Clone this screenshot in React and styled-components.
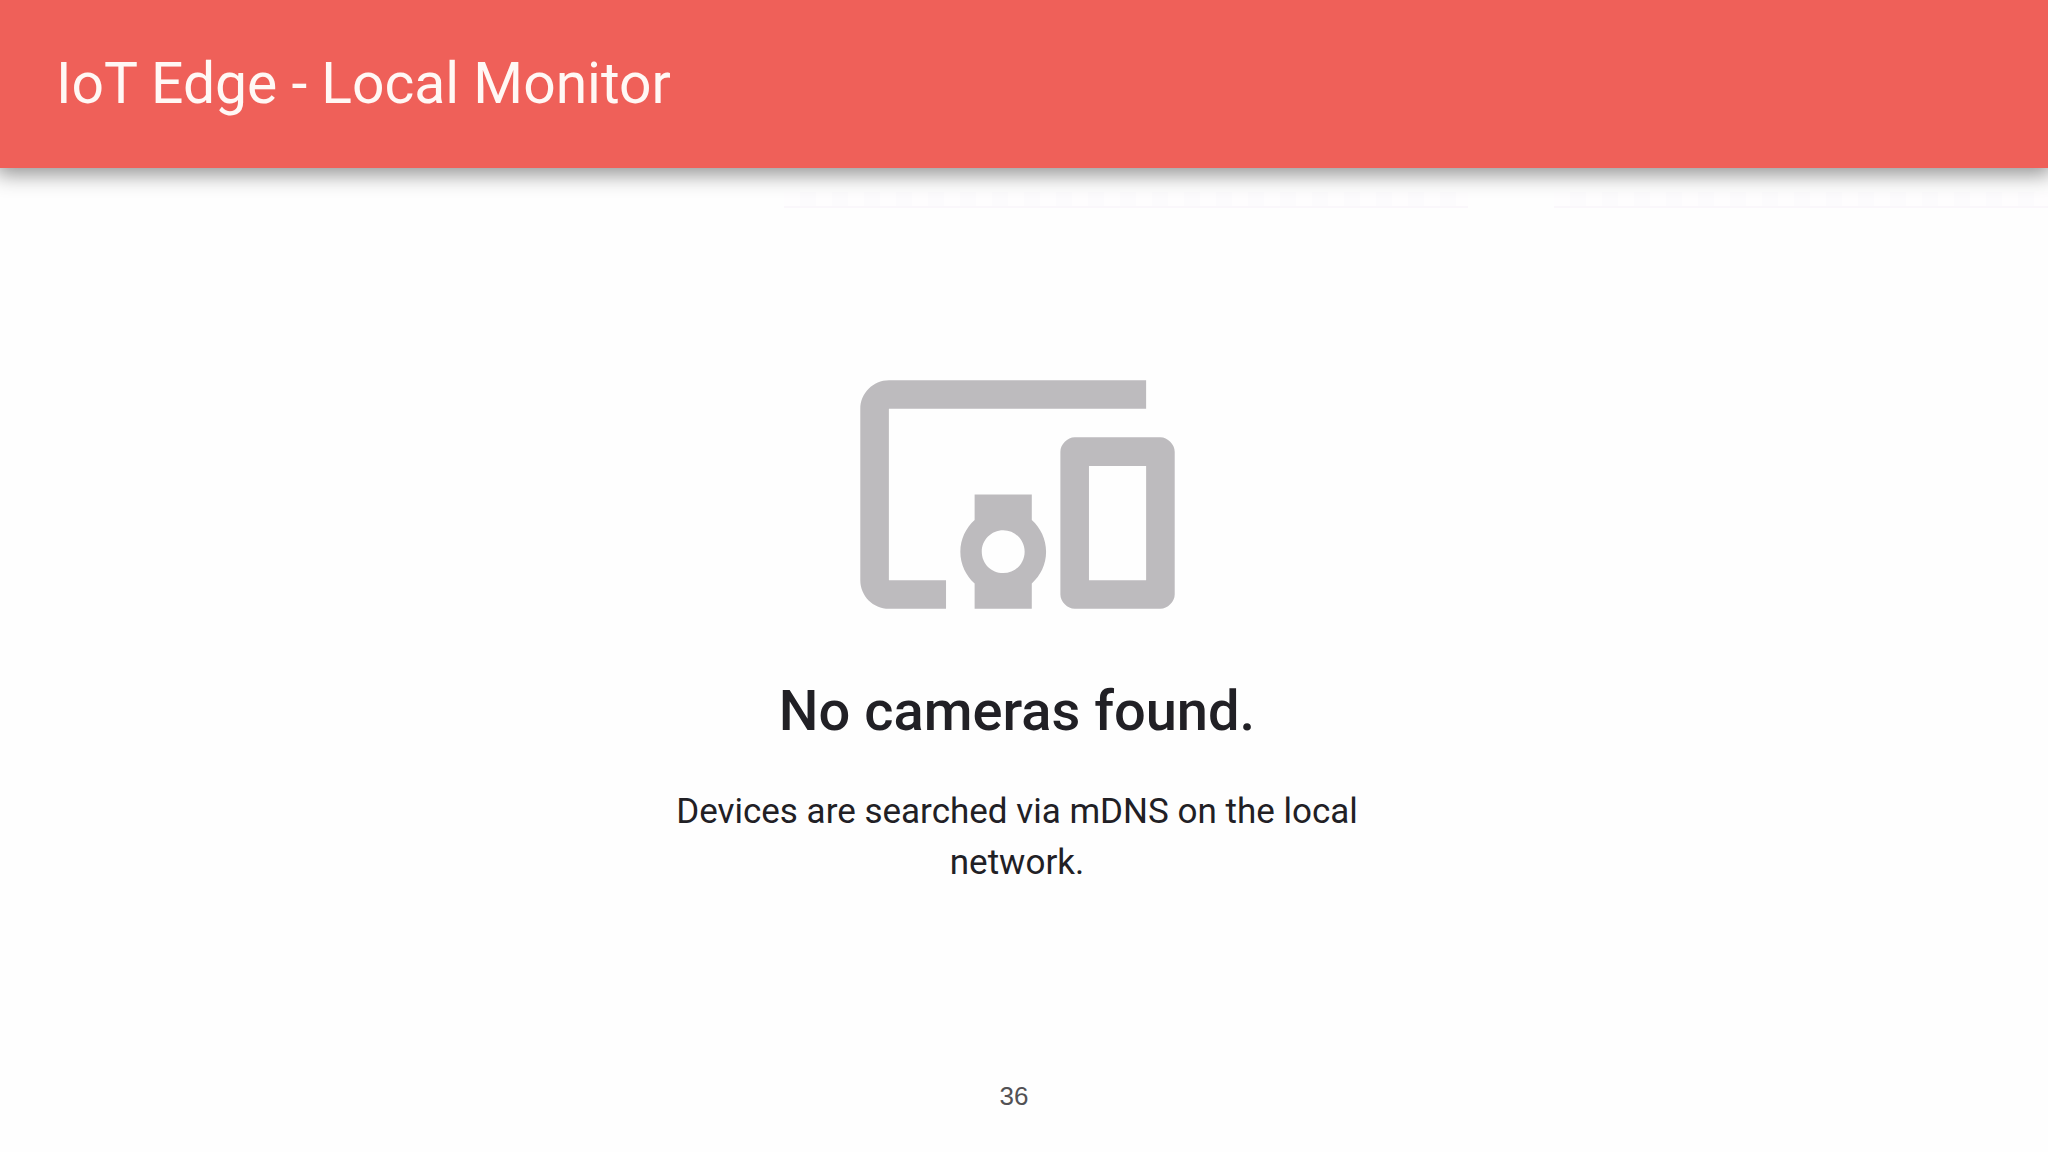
import React from 'react';
import styled, { createGlobalStyle } from 'styled-components';
import { MdDevicesOther } from 'react-icons/md';

const GlobalStyle = createGlobalStyle`
  * { box-sizing: border-box; }
  body {
    margin: 0;
    background: #fefefe;
    color: #212025;
    font-family: Roboto, "Liberation Sans", sans-serif;
  }
`;

const Page = styled.div`
  display: flex;
  flex-direction: column;
  min-height: 100vh;
`;

const Toolbar = styled.header`
  display: flex;
  align-items: center;
  padding: 48px 56px;
  background: #ef6059;
  box-shadow: 0 2px 20px 4px rgba(0, 0, 0, 0.44);
  clip-path: inset(0 0 -40px 0);
`;

const Title = styled.h1`
  margin: 0;
  font-size: 57px;
  line-height: 72px;
  font-weight: 400;
  color: #fff8f5;
`;

const PlaceholderRow = styled.div`
  display: grid;
  grid-template-columns: 684fr 494fr;
  column-gap: 86px;
  padding: 24px 0 0 38.3%;
`;

const Placeholder = styled.div`
  height: 16px;
  border-bottom: 2px solid #faf7fb;
  background: repeating-linear-gradient(90deg, #fefdfe 0 16px, #fcfbfd 16px 32px);
`;

const EmptyState = styled.main`
  flex: 1;
  display: flex;
  flex-direction: column;
  align-items: center;
  padding: 115px 14px 0 0;
  text-align: center;
`;

const DevicesIcon = styled(MdDevicesOther)`
  width: 343px;
  height: 343px;
  color: #bdbbbe;
`;

const Heading = styled.h2`
  margin: 8px 0 0;
  font-size: 56px;
  line-height: 74px;
  font-weight: 500;
`;

const Message = styled.p`
  margin: 38px 0 0;
  max-width: 720px;
  font-size: 35px;
  line-height: 51px;
`;

const PageNumber = styled.footer`
  padding: 0 20px 40px 0;
  font-family: "Liberation Sans", Arial, sans-serif;
  font-size: 26px;
  line-height: 32px;
  text-align: center;
  color: #525154;
`;

export default function App() {
  return (
    <Page>
      <GlobalStyle />
      <Toolbar>
        <Title>IoT Edge - Local Monitor</Title>
      </Toolbar>
      <PlaceholderRow aria-hidden="true">
        <Placeholder />
        <Placeholder />
      </PlaceholderRow>
      <EmptyState>
        <DevicesIcon aria-hidden="true" />
        <Heading>No cameras found.</Heading>
        <Message>Devices are searched via mDNS on the local network.</Message>
      </EmptyState>
      <PageNumber>36</PageNumber>
    </Page>
  );
}
